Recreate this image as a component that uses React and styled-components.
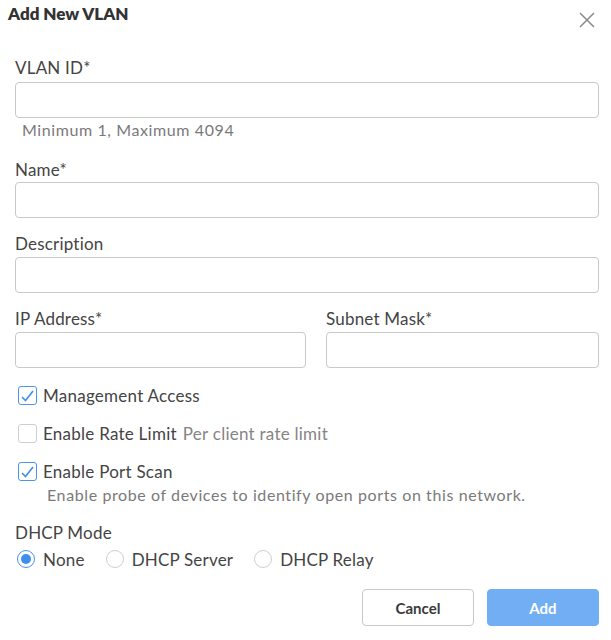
import React from "react";
import styled, { createGlobalStyle } from "styled-components";

const Global = createGlobalStyle`
  html, body { margin: 0; padding: 0; background: #fff; }
  body { font-family: Lato, "Open Sans", Arial, sans-serif; color: #444; }
  * { box-sizing: border-box; }
`;

const Dialog = styled.div`
  width: 611px;
  height: 640px;
  background: #fff;
  display: flex;
  flex-direction: column;
`;

const Header = styled.div`
  display: flex;
  justify-content: space-between;
  align-items: flex-start;
  height: 58px;
  padding: 4px 14px 0 8px;
`;

const Title = styled.h2`
  margin: 0;
  font-size: 17px;
  line-height: 20px;
  font-weight: 800;
  color: #333;
`;

const CloseButton = styled.button`
  border: none;
  background: none;
  padding: 0;
  margin-top: 8px;
  width: 18px;
  height: 18px;
  cursor: pointer;
  display: flex;
`;

const Form = styled.div`
  display: flex;
  flex-direction: column;
  padding: 0 12px 0 15px;
`;

const Field = styled.div`
  display: flex;
  flex-direction: column;
  margin-top: ${(p) => p.$mt || 0}px;
`;

const Label = styled.label`
  font-size: 17px;
  letter-spacing: 0.2px;
  line-height: 20px;
  color: #444;
  margin-bottom: ${(p) => p.$mb ?? 3}px;
`;

const Input = styled.input`
  height: 36px;
  width: 100%;
  border: 1px solid #c9c9c9;
  border-radius: 4px;
  font-size: 15px;
  padding: 0 10px;
  outline: none;
`;

const Hint = styled.div`
  font-size: 16px;
  letter-spacing: 0.6px;
  line-height: 20px;
  color: #7a7a7a;
  margin: ${(p) => p.$m || "0"};
`;

const Row = styled.div`
  display: grid;
  grid-template-columns: 291px 1fr;
  gap: 20px;
  margin-top: 16px;
`;

const CheckRow = styled.label`
  display: flex;
  align-items: center;
  height: 20px;
  padding-left: 3px;
  margin-top: ${(p) => p.$mt || 0}px;
  font-size: 17px;
  letter-spacing: 0.25px;
  color: #444;
`;

const Box = styled.span`
  width: 19px;
  height: 19px;
  border: 1px solid ${(p) => (p.$on ? "#4a94ea" : "#cfcfcf")};
  border-radius: 3px;
  margin-right: 6px;
  display: flex;
  align-items: center;
  justify-content: center;
  background: #fff;
`;

const Muted = styled.span`
  color: #858585;
  margin-left: 6px;
`;

const Section = styled.div`
  font-size: 17px;
  letter-spacing: 0.2px;
  line-height: 20px;
  color: #444;
  margin-top: 18px;
`;

const RadioGroup = styled.div`
  display: flex;
  gap: 21px;
  margin-top: 6px;
  padding-left: 2px;
`;

const RadioItem = styled.label`
  display: flex;
  align-items: center;
  height: 20px;
  font-size: 17px;
  letter-spacing: 0.2px;
  color: #444;
`;

const Circle = styled.span`
  width: 18px;
  height: 18px;
  border-radius: 50%;
  border: 1px solid ${(p) => (p.$on ? "#4a94ea" : "#cfcfcf")};
  margin-right: 8px;
  display: flex;
  align-items: center;
  justify-content: center;
  &::after {
    content: "";
    display: ${(p) => (p.$on ? "block" : "none")};
    width: 10px;
    height: 10px;
    border-radius: 50%;
    background: #3f8ee9;
  }
`;

const Footer = styled.div`
  display: flex;
  justify-content: flex-end;
  gap: 13px;
  margin-top: 20px;
`;

const Button = styled.button`
  width: 112px;
  height: 37px;
  border-radius: 4px;
  font-family: inherit;
  font-size: 15px;
  font-weight: 700;
  cursor: pointer;
  border: 1px solid ${(p) => (p.$primary ? "#72aef3" : "#c9c9c9")};
  background: ${(p) => (p.$primary ? "#72aef3" : "#fff")};
  color: ${(p) => (p.$primary ? "#fff" : "#3a3a3a")};
`;

const Check = () => (
  <svg width="15" height="15" viewBox="0 0 15 15">
    <path d="M2 9 L5.5 12.5 L13 3" fill="none" stroke="#3f8ee9" strokeWidth="1.6" />
  </svg>
);

export default function App() {
  return (
    <>
      <Global />
      <Dialog>
        <Header>
          <Title>Add New VLAN</Title>
          <CloseButton aria-label="Close">
            <svg width="16" height="16" viewBox="0 0 16 16">
              <path d="M1 1 L15 15 M15 1 L1 15" stroke="#8a8a8a" strokeWidth="1.5" />
            </svg>
          </CloseButton>
        </Header>
        <Form>
          <Field>
            <Label $mb={4}>VLAN ID*</Label>
            <Input />
            <Hint $m="2px 0 0 7px">Minimum 1, Maximum 4094</Hint>
          </Field>
          <Field $mt={20}>
            <Label $mb={2}>Name*</Label>
            <Input />
          </Field>
          <Field $mt={16}>
            <Label>Description</Label>
            <Input />
          </Field>
          <Row>
            <Field>
              <Label>IP Address*</Label>
              <Input />
            </Field>
            <Field>
              <Label>Subnet Mask*</Label>
              <Input />
            </Field>
          </Row>
          <CheckRow $mt={17}>
            <Box $on><Check /></Box>
            Management Access
          </CheckRow>
          <CheckRow $mt={18}>
            <Box />
            Enable Rate Limit
            <Muted>Per client rate limit</Muted>
          </CheckRow>
          <CheckRow $mt={18}>
            <Box $on><Check /></Box>
            Enable Port Scan
          </CheckRow>
          <Hint $m="4px 0 0 32px">Enable probe of devices to identify open ports on this network.</Hint>
          <Section>DHCP Mode</Section>
          <RadioGroup>
            <RadioItem><Circle $on />None</RadioItem>
            <RadioItem><Circle />DHCP Server</RadioItem>
            <RadioItem><Circle />DHCP Relay</RadioItem>
          </RadioGroup>
          <Footer>
            <Button>Cancel</Button>
            <Button $primary>Add</Button>
          </Footer>
        </Form>
      </Dialog>
    </>
  );
}
